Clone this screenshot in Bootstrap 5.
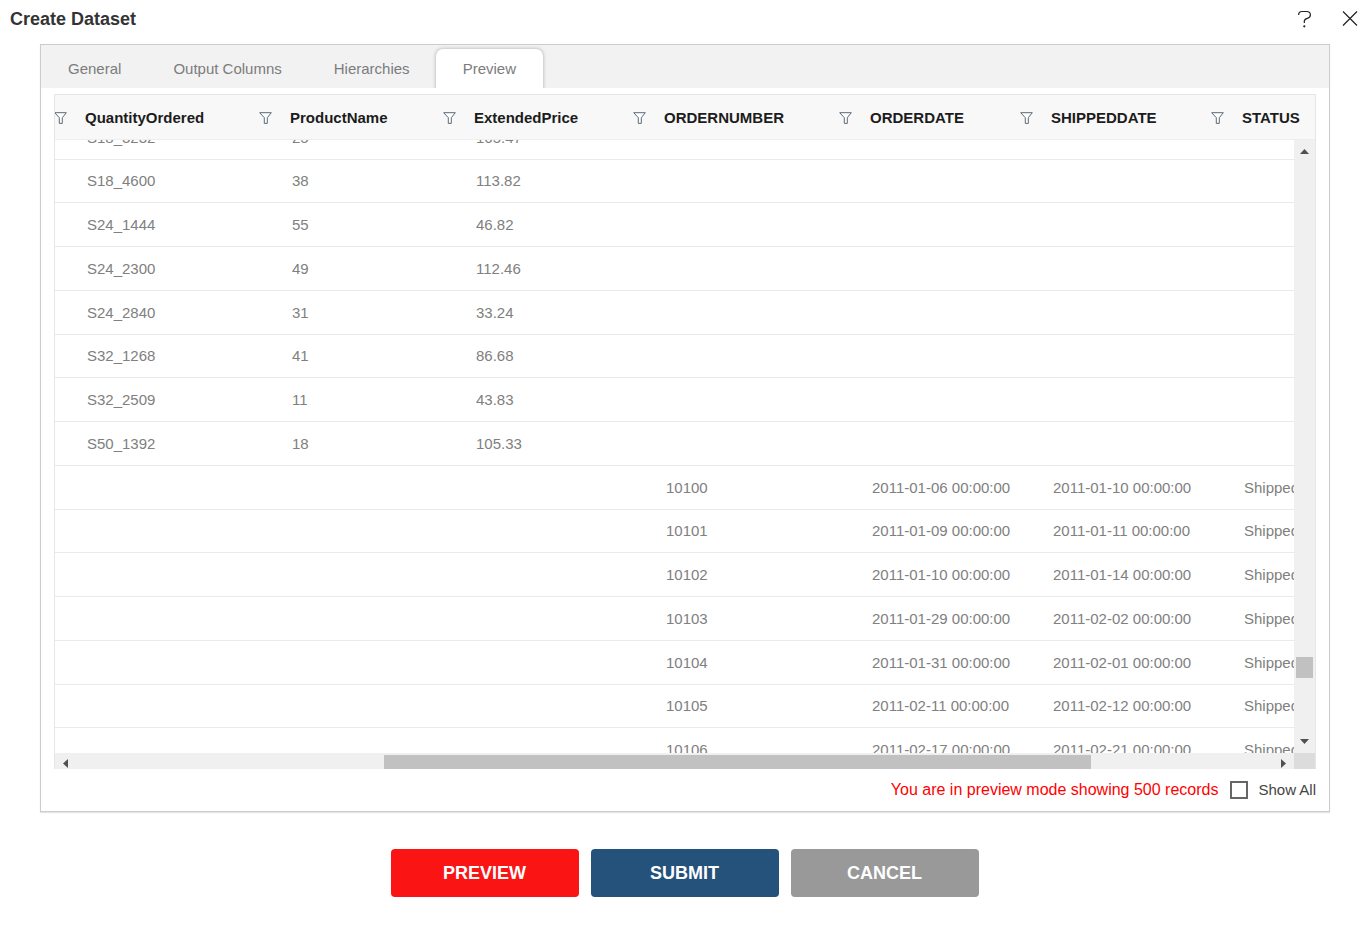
<!DOCTYPE html>
<html lang="en">
<head>
<meta charset="utf-8">
<meta name="viewport" content="width=device-width, initial-scale=1">
<title>Create Dataset</title>
<link rel="stylesheet" href="https://cdn.jsdelivr.net/npm/bootstrap@5.3.0/dist/css/bootstrap.min.css">
<style>
  body { font-family: "Liberation Sans", Arial, sans-serif; font-size: 15px; line-height: 20px; color: #333; background: #fff; }
  .dialog-title { font-size: 18px; line-height: 20px; font-weight: 700; }
  .dialog-head { height: 44px; padding: 9px 10px 0 10px; }
  .dialog-tools { gap: 27px; }
  .tool-btn { border: 0; background: none; padding: 0; width: 18px; height: 20px; line-height: 0; }
  .panel { margin: 0 39px 0 40px; border: 1px solid #ccc; box-shadow: 0 1px 1px #e4e4e4; }
  .panel .nav { background: #f2f2f2; height: 43px; padding: 4px 0 0 1px; }
  .panel .nav-link { color: #7c7c7c; padding: 10px 26px 0; height: 39px; border: 0; border-radius: 7px 7px 0 0; }
  .panel .nav-link.active { background: #fff; color: #7c7c7c; padding: 10px 27px 0; box-shadow: 0 0 3px 1px #c6c6c6; clip-path: inset(-4px -4px 0 -4px); }
  .grid-box { margin: 6px 13px 0 13px; border: 1px solid #e6e6e6; border-bottom: 0; }
  .grid-head { background: #f8f8f8; height: 45px; border-bottom: 1px solid #eee; }
  .grid-table { table-layout: fixed; width: 100%; border-collapse: separate; border-spacing: 0; white-space: nowrap; }
  .grid-table th { height: 44px; padding: 2px 8px 0 10px; color: #1c1c1c; font-weight: 700; }
  .grid-table th:first-child { padding-left: 0; }
  .head-cell { display: flex; align-items: center; justify-content: space-between; }
  th:first-child .head-cell { justify-content: flex-end; }
  .grid-table td { height: 44px; padding: 0 0 0 12px; border-bottom: 1px solid #eaeaea; color: #808080; }
  .grid-table tr:nth-child(4n+2) td { height: 43px; }
  /* the list is scrolled part-way into its first visible row */
  .rows-view .grid-table { margin-top: -24px; }
  .w-a { width: 20px; } .w-b { width: 205px; } .w-c { width: 184px; } .w-d { width: 190px; }
  .w-e { width: 206px; } .w-f { width: 181px; } .w-g { width: 191px; }
  .bar-v { width: 21px; background: #f0f0f0; padding: 0 2px; }
  .bar-h { height: 16px; background: #f0f0f0; padding-top: 2px; }
  .bar-corner { width: 21px; height: 16px; background: #dcdcdc; }
  .thumb { background: #c1c1c1; }
  .arrow { flex: none; display: block; }
  .notice { color: #f00; font-size: 16px; }
  .foot { height: 42px; padding: 0 13px 0 14px; }
  .form-check-input.show-all { width: 18px; height: 18px; margin: 0 10px 0 12px; border: 2px solid #666; border-radius: 0; }
  .foot label { color: #444; }
  .actions { gap: 12px; padding: 37px 0; }
  .actions .btn { width: 188px; height: 48px; padding: 0; border: 0; border-radius: 4px; color: #fff; font-size: 18px; font-weight: 700; }
  .c-red { background: #fa1414; } .c-blue { background: #24527a; } .c-gray { background: #999; }
</style>
</head>
<body>
<svg class="d-none" aria-hidden="true">
  <symbol id="funnel" viewBox="0 0 13 12"><path d="M.7 .7H12.3L8.3 5.7V11.4H5.3V5.7Z" fill="#fff" stroke="#5b6b78" stroke-width="1"/></symbol>
</svg>
<div class="vh-100 d-flex flex-column overflow-hidden">
  <header class="dialog-head d-flex justify-content-between align-items-start flex-shrink-0">
    <h1 class="dialog-title m-0">Create Dataset</h1>
    <div class="dialog-tools d-flex">
      <button class="tool-btn" type="button" aria-label="Help"><svg width="18" height="20" viewBox="0 0 18 20" fill="none" stroke="#222" stroke-width="1.2"><path d="M2.6 6C2.6 3.5 4 2.5 6 2.5H10.500C13 2.500 14.400 3.700 14.400 5.700C14.400 7.800 13.200 8.800 11.300 9.400C9.100 10.100 8.300 10.900 8.300 12.200V14"/><circle cx="8.300" cy="17.300" r="1.100" fill="#222" stroke="none"/></svg></button>
      <button class="tool-btn" type="button" aria-label="Close"><svg width="18" height="20" viewBox="0 0 18 20" stroke="#222" stroke-width="1.2"><path d="M2 2.5L16 16.5M16 2.5L2 16.5"/></svg></button>
    </div>
  </header>

  <main class="panel d-flex flex-column flex-grow-1 overflow-hidden">
    <nav class="nav flex-nowrap flex-shrink-0">
      <a class="nav-link" href="#general">General</a>
      <a class="nav-link" href="#columns">Output Columns</a>
      <a class="nav-link" href="#hierarchies">Hierarchies</a>
      <a class="nav-link active" aria-current="page" href="#preview">Preview</a>
    </nav>

    <section class="grid-box d-flex flex-column flex-grow-1 overflow-hidden">
      <div class="grid-head overflow-hidden flex-shrink-0">
        <table class="grid-table">
          <colgroup><col class="w-a"><col class="w-b"><col class="w-c"><col class="w-d"><col class="w-e"><col class="w-f"><col class="w-g"><col></colgroup>
          <thead><tr id="headRow"></tr></thead>
        </table>
      </div>
      <div class="d-flex flex-grow-1 overflow-hidden">
        <div class="rows-view flex-grow-1 overflow-hidden">
          <table class="grid-table">
            <colgroup><col class="w-a"><col class="w-b"><col class="w-c"><col class="w-d"><col class="w-e"><col class="w-f"><col class="w-g"><col></colgroup>
            <tbody id="rows"></tbody>
          </table>
        </div>
        <div class="bar-v d-flex flex-column flex-shrink-0">
          <svg class="arrow" width="17" height="20" viewBox="0 0 17 20"><path d="M4 14L8.500 9L13 14Z" fill="#505050"/></svg>
          <div style="flex:497 0 0"></div><div class="thumb" style="flex:21 0 0"></div><div style="flex:55 0 0"></div>
          <svg class="arrow" width="17" height="20" viewBox="0 0 17 20"><path d="M4 6L8.500 11L13 6Z" fill="#505050"/></svg>
        </div>
      </div>
      <div class="d-flex flex-shrink-0">
        <div class="bar-h d-flex flex-grow-1">
          <svg class="arrow" width="20" height="14" viewBox="0 0 20 14"><path d="M13 4L8 8.500L13 13Z" fill="#505050"/></svg>
          <div style="flex:309 0 0"></div><div class="thumb" style="flex:707 0 0"></div><div style="flex:183 0 0"></div>
          <svg class="arrow" width="20" height="14" viewBox="0 0 20 14"><path d="M7 4L12 8.500L7 13Z" fill="#505050"/></svg>
        </div>
        <div class="bar-corner"></div>
      </div>
    </section>

    <div class="foot d-flex align-items-center justify-content-end flex-shrink-0">
      <span class="notice">You are in preview mode showing 500 records</span>
      <input class="form-check-input show-all" type="checkbox" id="showAll">
      <label for="showAll">Show All</label>
    </div>
  </main>

  <footer class="actions d-flex justify-content-center flex-shrink-0">
    <button type="button" class="btn c-red">PREVIEW</button>
    <button type="button" class="btn c-blue">SUBMIT</button>
    <button type="button" class="btn c-gray">CANCEL</button>
  </footer>
</div>
<script>
  const heads = ["", "QuantityOrdered", "ProductName", "ExtendedPrice", "ORDERNUMBER", "ORDERDATE", "SHIPPEDDATE", "STATUS"];
  document.getElementById("headRow").innerHTML = heads.map((h, i) =>
    `<th scope="col"><div class="head-cell">${h ? `<span>${h}</span>` : ""}` +
    (i < 7 ? `<svg class="flex-shrink-0" width="13" height="12"><use href="#funnel"/></svg>` : "") + `</div></th>`).join("");

  const items = [["S18_3232", 25, "165.47"], ["S18_4600", 38, "113.82"], ["S24_1444", 55, "46.82"], ["S24_2300", 49, "112.46"],
    ["S24_2840", 31, "33.24"], ["S32_1268", 41, "86.68"], ["S32_2509", 11, "43.83"], ["S50_1392", 18, "105.33"]];
  const orders = [[10100, "01-06", "01-10"], [10101, "01-09", "01-11"], [10102, "01-10", "01-14"], [10103, "01-29", "02-02"],
    [10104, "01-31", "02-01"], [10105, "02-11", "02-12"], [10106, "02-17", "02-21"]];
  const stamp = d => `2011-${d} 00:00:00`;
  const data = [...items.map(r => ["", ...r, "", "", "", ""]),
    ...orders.map(([n, a, b]) => ["", "", "", "", n, stamp(a), stamp(b), "Shipped"])];
  document.getElementById("rows").innerHTML = data.map(r => "<tr>" + r.map(c => `<td>${c}</td>`).join("") + "</tr>").join("");
</script>
<script src="https://cdn.jsdelivr.net/npm/bootstrap@5.3.0/dist/js/bootstrap.bundle.min.js"></script>
</body>
</html>
